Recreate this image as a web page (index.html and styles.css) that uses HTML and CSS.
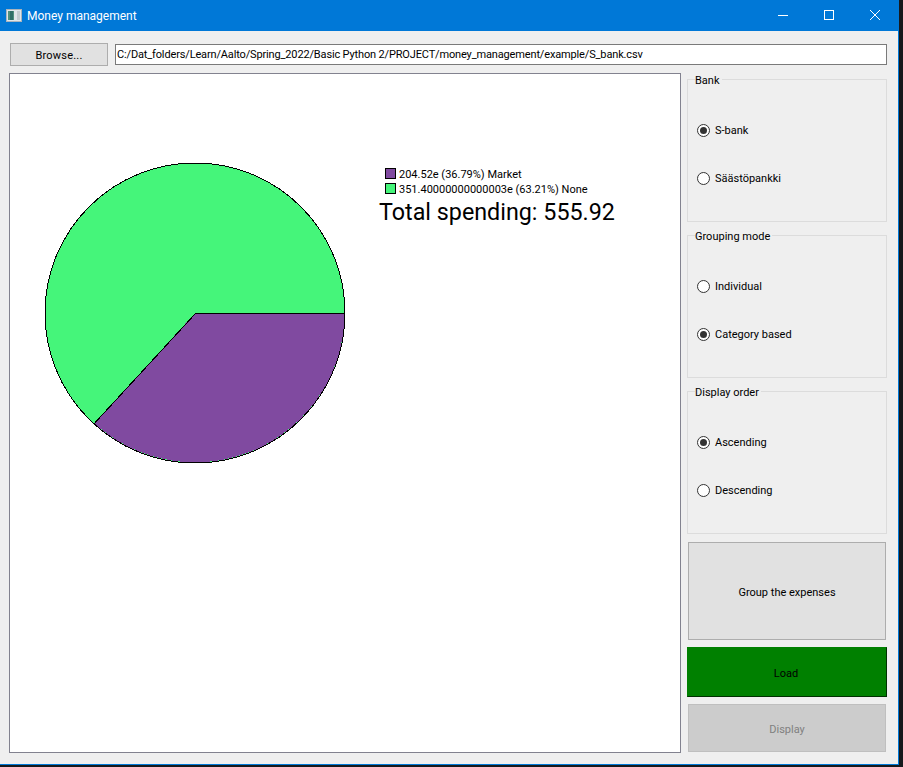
FILE: index.html
```html
<!doctype html>
<html>
<head>
    <meta charset="UTF-8">
    <title>Money management</title>
    <link rel="stylesheet" href="styles.css">
</head>
<body>
    <div class="window">
        <header class="titlebar">
            <svg class="app-icon" width="16" height="14" viewBox="0 0 16 14" shape-rendering="crispEdges">
                <rect x="0.5" y="0.5" width="15" height="12" fill="#dfe6ea" stroke="#aab4bc"/>
                <rect x="2" y="2" width="6" height="9" fill="#4f8f7c"/>
                <rect x="4" y="2" width="3" height="9" fill="#2f6f68"/>
                <rect x="11" y="2" width="3" height="9" fill="#c3ccd0"/>
            </svg>
            <span class="title">Money management</span>
            <div class="controls">
                <svg class="control" width="46" height="31" viewBox="0 0 46 31">
                    <path d="M18 15.5h10" stroke="#fff" fill="none"/>
                </svg>
                <svg class="control" width="46" height="31" viewBox="0 0 46 31">
                    <rect x="18.5" y="10.5" width="9" height="9" stroke="#fff" fill="none"/>
                </svg>
                <svg class="control" width="46" height="31" viewBox="0 0 46 31">
                    <path d="M18 10l10 10M28 10l-10 10" stroke="#fff" fill="none"/>
                </svg>
            </div>
        </header>

        <div class="content">
            <div class="toolbar">
                <button class="btn btn-browse">Browse...</button>
                <div class="path">C:/Dat_folders/Learn/Aalto/Spring_2022/Basic Python 2/PROJECT/money_management/example/S_bank.csv</div>
            </div>

            <div class="main">
                <div class="canvas">
                    <svg class="pie" width="302" height="302" viewBox="0 0 302 302" shape-rendering="crispEdges">
                        <circle cx="151" cy="151" r="150" fill="#45f57a" stroke="#000"/>
                        <path d="M151 151 L300.5 151 A149.5 149.5 0 0 1 50.4 261.4 Z" fill="#804aa0"/>
                        <path d="M301 151.5 L151.5 151.5 L50.4 261.4" fill="none" stroke="#000"/>
                    </svg>
                    <div class="legend">
                        <div class="legend-row"><span class="swatch swatch-market"></span>204.52e (36.79%) Market</div>
                        <div class="legend-row"><span class="swatch swatch-none"></span>351.40000000000003e (63.21%) None</div>
                        <div class="total">Total spending: 555.92</div>
                    </div>
                </div>

                <aside class="side">
                    <div class="group">
                        <span class="group-title">Bank</span>
                        <div class="radio"><span class="dot checked"></span>S-bank</div>
                        <div class="radio"><span class="dot"></span>Säästöpankki</div>
                    </div>
                    <div class="group">
                        <span class="group-title">Grouping mode</span>
                        <div class="radio"><span class="dot"></span>Individual</div>
                        <div class="radio"><span class="dot checked"></span>Category based</div>
                    </div>
                    <div class="group">
                        <span class="group-title">Display order</span>
                        <div class="radio"><span class="dot checked"></span>Ascending</div>
                        <div class="radio"><span class="dot"></span>Descending</div>
                    </div>
                    <button class="btn btn-group">Group the expenses</button>
                    <button class="btn btn-load">Load</button>
                    <button class="btn btn-display">Display</button>
                </aside>
            </div>
        </div>
    </div>
</body>
</html>
```

FILE: styles.css
```css
* {
    box-sizing: border-box;
}

html, body {
    height: 100%;
}

body {
    margin: 0;
    background-color: #16191c;
    font-family: Roboto, "Open Sans", sans-serif;
    font-size: 11px;
    color: #000;
    overflow: hidden;
}

.window {
    width: 899px;
    height: 765px;
    background-color: #efefef;
    border-right: 1px solid #0078d7;
    border-bottom: 1px solid #0078d7;
    display: flex;
    flex-direction: column;
}

.titlebar {
    height: 31px;
    background-color: #0078d7;
    color: #fff;
    display: flex;
    align-items: center;
    padding-left: 6px;
    flex-shrink: 0;
}

.app-icon {
    margin-right: 5px;
}

.title {
    font-size: 12px;
}

.controls {
    margin-left: auto;
    display: flex;
}

.control {
    display: block;
}

.content {
    padding: 12px 0 0 9px;
}

.toolbar {
    display: flex;
    align-items: flex-start;
    height: 30px;
}

.btn {
    font-family: inherit;
    font-size: 11px;
    color: #000;
    border: 1px solid #adadad;
    background-color: #e1e1e1;
    padding: 2px 0 0 0;
    display: block;
}

.btn-browse {
    width: 98px;
    height: 23px;
    margin-left: 1px;
    letter-spacing: 0.2px;
}

.path {
    width: 772px;
    height: 21px;
    margin: 1px 0 0 7px;
    border: 1px solid #7a7a7a;
    background-color: #fff;
    padding-left: 1px;
    line-height: 19px;
    letter-spacing: -0.15px;
    white-space: nowrap;
}

.main {
    display: flex;
}

.canvas {
    position: relative;
    width: 672px;
    height: 680px;
    background-color: #fff;
    border: 1px solid #82828f;
}

.pie {
    position: absolute;
    left: 34px;
    top: 88px;
}

.legend {
    position: absolute;
    left: 369px;
    top: 93px;
}

.legend-row {
    display: flex;
    align-items: center;
    height: 15px;
    padding-left: 6px;
    white-space: nowrap;
}

.swatch {
    width: 11px;
    height: 11px;
    border: 1px solid #000;
    margin: 0 3px 2px 0;
}

.swatch-market {
    background-color: #804aa0;
}

.swatch-none {
    background-color: #45f57a;
}

.total {
    font-size: 23.3px;
    line-height: 31px;
    white-space: nowrap;
}

.side {
    width: 200px;
    margin-left: 6px;
    padding-top: 6px;
    display: flex;
    flex-direction: column;
}

.group {
    position: relative;
    height: 143px;
    margin-bottom: 13px;
    border: 1px solid #dcdcdc;
    padding: 38px 0 0 9px;
}

.group:nth-child(3) {
    margin-bottom: 8px;
}

.group-title {
    position: absolute;
    left: 7px;
    top: -6px;
    padding-right: 2px;
    background-color: #efefef;
    line-height: 14px;
}

.radio {
    display: flex;
    align-items: center;
    height: 24px;
    margin-bottom: 24px;
}

.dot {
    position: relative;
    width: 13px;
    height: 13px;
    border: 1px solid #333;
    border-radius: 50%;
    background-color: #fff;
    margin-right: 5px;
}

.dot.checked::after {
    content: "";
    position: absolute;
    left: 2px;
    top: 2px;
    width: 7px;
    height: 7px;
    border-radius: 50%;
    background-color: #333;
}

.btn-group {
    width: 198px;
    height: 98px;
    margin: 0 0 7px 1px;
}

.btn-load {
    width: 200px;
    height: 50px;
    margin-bottom: 7px;
    padding-right: 2px;
    background-color: #008000;
    border: 1px solid #008000;
    border-right-color: #003000;
    border-bottom-color: #003000;
}

.btn-display {
    width: 198px;
    height: 48px;
    margin-left: 1px;
    background-color: #cccccc;
    border-color: #bfbfbf;
    color: #808080;
}
```
